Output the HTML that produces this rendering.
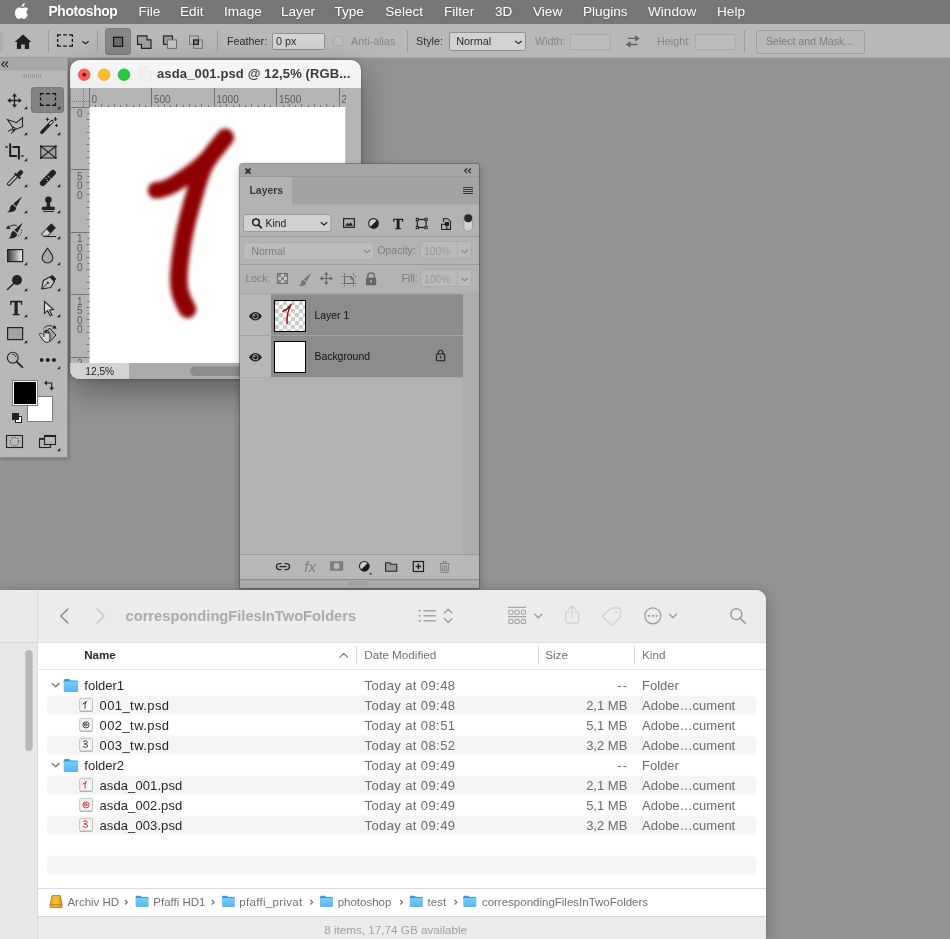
<!DOCTYPE html>
<html><head><meta charset="utf-8"><title>Photoshop</title>
<style>
*{box-sizing:border-box;margin:0;padding:0}
html,body{width:950px;height:939px;overflow:hidden;background:#939393;font-family:"Liberation Sans",sans-serif;}
body{position:relative}
.abs,.abs *{position:absolute}
.t{position:absolute;white-space:nowrap;line-height:1;will-change:opacity}
svg{position:absolute;overflow:visible}
/* menubar */
#menubar{left:0;top:0;width:950px;height:24px;background:#777777}
#menubar .t{color:#fff;font-size:13.6px;top:4.9px;text-shadow:0 1px 2px rgba(0,0,0,.25)}
/* options bar */
#opts{left:0;top:24px;width:950px;height:34px;background:#b8b8b8;border-bottom:1px solid #a6a6a6}
#opts .t{font-size:10.8px;color:#2a2a2a;top:12px}
#opts .dis{color:#878787}
.sep{position:absolute;width:1px;background:#9a9a9a;top:6px;height:22px}
/* tools */
#toolsvg,#toolT{z-index:6}
#tools{z-index:5;left:0;top:58px;width:68px;height:400px;background:#b8b8b8;border-right:1px solid #8f8f8f;border-bottom:1px solid #8f8f8f;box-shadow:1px 1px 3px rgba(0,0,0,.25)}
/* doc window */
#doc{left:70px;top:60px;width:291px;height:319px;border-radius:10px 10px 9px 9px;background:#b8b8b8;overflow:hidden;box-shadow:0 0 1px rgba(0,0,0,.6),0 0 4px rgba(0,0,0,.2),0 12px 32px rgba(0,0,0,.36)}
.rl{font-size:10px;color:#5a5a5a}
.rl.v{line-height:9.5px}
/* layers */
#layers{left:240px;top:164px;width:238.500px;height:423.500px;overflow:hidden;background:#b3b3b3;border-radius:3px 3px 0 0;box-shadow:0 0 0 1px rgba(90,90,90,.6),0 3px 8px rgba(0,0,0,.3)}
#layers .t{font-size:10.4px;color:#222;margin-top:1.3px}
/* finder */
#finder{left:0;top:590px;width:766px;height:349px;background:#fff;border-radius:0 10px 0 0;overflow:hidden;box-shadow:0 0 1px rgba(0,0,0,.45),0 3px 16px rgba(0,0,0,.24)}
#finder .t{font-size:13px;color:#262626}
#finder .gr{color:#6b6b6b}
#finder .nm{letter-spacing:0}
#finder .tw{letter-spacing:.42px}
#finder .dt{letter-spacing:.4px}
#finder .hd{font-size:11.700px;color:#727272}
#finder .pb{font-size:11.500px;color:#707070;margin-top:.6px}
</style></head><body>

<div id="menubar" class="abs">
<svg style="left:14.500px;top:2.500px" width="14" height="17" viewBox="0 0 14 17"><path d="M9.700 0.300c.1 1-.3 1.900-.9 2.600-.6.700-1.500 1.200-2.400 1.100-.1-.9.300-1.900.9-2.500.6-.7 1.600-1.200 2.400-1.200zM12.800 12.300c-.4.900-.6 1.300-1.100 2.100-.7 1.100-1.700 2.400-2.900 2.400-1.100 0-1.400-.7-2.800-.7-1.500 0-1.800.7-2.900.7-1.200 0-2.100-1.200-2.800-2.300C-1.200 11.900-.9 8.300.6 6.500c.9-1.100 2.200-1.700 3.400-1.700 1.300 0 2.100.7 3.100.7s1.700-.7 3.200-.7c1.100 0 2.300.6 3.100 1.600-2.700 1.500-2.300 5.400-.6 5.900z" fill="#fff" transform="translate(.6 0) scale(.95)"/></svg>
<span class="t" style="left:48.500px;font-weight:bold;font-size:13.800px;letter-spacing:-.35px;top:4.700px">Photoshop</span>
<span class="t" style="left:138.400px">File</span>
<span class="t" style="left:180px">Edit</span>
<span class="t" style="left:224px">Image</span>
<span class="t" style="left:281px">Layer</span>
<span class="t" style="left:334.400px">Type</span>
<span class="t" style="left:385.300px">Select</span>
<span class="t" style="left:444px">Filter</span>
<span class="t" style="left:495px">3D</span>
<span class="t" style="left:533px">View</span>
<span class="t" style="left:583px">Plugins</span>
<span class="t" style="left:648px">Window</span>
<span class="t" style="left:717px">Help</span>
</div>

<div id="opts" class="abs">
<svg style="left:0;top:0" width="950" height="34" viewBox="0 24 950 34">
<g stroke="#a3a3a3" stroke-width="1"><path d="M0 32.500h3M0 34.500h3M0 36.500h3M0 38.500h3M0 40.500h3M0 42.500h3M0 44.500h3M0 46.500h3M0 48.500h3M0 50.500h3"/></g>
<!-- home -->
<path d="M23 34.400L31.300 42h-2.200v6.900h-4.300v-4.500h-3.600v4.500h-4.300V42h-2.200z" fill="#1f1f1f"/>
<!-- marquee -->
<path d="M57.650 37V34.850H61M63.200 34.850H66.800M69 34.850H72.350V37M72.350 38.900V42.100M72.350 44V46.150H69M66.800 46.150H63.200M61 46.150H57.650V44M57.650 42.100V38.900" fill="none" stroke="#111" stroke-width="1.300"/>
<path d="M82.300 41.300L85.500 43.800L88.700 41.300" fill="none" stroke="#222" stroke-width="1.200"/>
<!-- selected -->
<rect x="105.500" y="28.500" width="25" height="26" rx="2.500" fill="#878787" stroke="#7c7c7c"/>
<rect x="113.600" y="37.300" width="9" height="9" fill="#6c6c6c" stroke="#111" stroke-width="1.200"/>
<!-- add -->
<path d="M137.500 35.900h9.500v4h4v8.500h-9.500v-4h-4z" fill="#a0a0a0" stroke="#1e1e1e" stroke-width="1.100"/>
<!-- subtract -->
<rect x="163.500" y="35.900" width="9" height="8.500" fill="#9a9a9a" stroke="#1e1e1e" stroke-width="1.100"/>
<rect x="167.500" y="39.900" width="9" height="8.500" fill="#c2c2c2" stroke="#6e6e6e" stroke-width="1"/>
<!-- intersect -->
<rect x="189.500" y="35.900" width="9" height="8.500" fill="none" stroke="#767676" stroke-width="1"/>
<rect x="193.500" y="39.900" width="9" height="8.500" fill="none" stroke="#767676" stroke-width="1"/>
<rect x="193.600" y="40" width="4.800" height="4.300" fill="#8c8c8c" stroke="#1e1e1e" stroke-width="1.200"/>
<!-- feather input -->
<rect x="272.500" y="33.500" width="52" height="16" rx="1" fill="#d4d4d4" stroke="#8e8e8e"/>
<!-- checkbox -->
<rect x="333.500" y="36.500" width="9" height="9" rx="1.500" fill="#bcbcbc" stroke="#a9a9a9"/>
<!-- style select -->
<rect x="449.500" y="32.500" width="76" height="18" rx="2" fill="#d2d2d2" stroke="#8e8e8e"/>
<path d="M515.300 41L518.500 43.600L521.700 41" fill="none" stroke="#222" stroke-width="1.200"/>
<!-- width/height inputs -->
<rect x="570.500" y="34.500" width="39.500" height="15" fill="#bcbcbc" stroke="#a8a8a8"/>
<rect x="695.500" y="34.500" width="39.500" height="15" fill="#bcbcbc" stroke="#a8a8a8"/>
<!-- swap -->
<g fill="#626262"><path d="M628 37.700h7v-2.500l4.800 3.200-4.800 3.200v-2.500h-7z"/><path d="M637.500 43.800h-7v-2.500l-4.800 3.200 4.800 3.200v-2.500h7z"/></g>
<!-- select and mask -->
<rect x="756.500" y="30.500" width="108" height="23" rx="2" fill="#b8b8b8" stroke="#9c9c9c"/>
</svg>
<div class="sep" style="left:48px"></div>
<div class="sep" style="left:97px"></div>
<div class="sep" style="left:217px"></div>
<div class="sep" style="left:407px"></div>
<div class="sep" style="left:744px"></div>
<span class="t" id="o1" style="left:227px">Feather:</span>
<span class="t" id="o2" style="left:276px">0 px</span>
<span class="t dis" id="o3" style="left:351px">Anti-alias</span>
<span class="t" id="o4" style="left:416px">Style:</span>
<span class="t" id="o5" style="left:456.300px">Normal</span>
<span class="t dis" id="o6" style="left:535px">Width:</span>
<span class="t dis" id="o7" style="left:657px">Height:</span>
<span class="t dis" id="o8" style="left:766px;color:#7e7e7e;letter-spacing:-.1px">Select and Mask...</span>
</div>

<div id="tools" class="abs"></div>
<svg id="toolsvg" style="left:0;top:0" width="70" height="460" viewBox="0 0 70 460">
<defs>
<linearGradient id="gr1" x1="0" x2="1" y1="0" y2="0"><stop offset="0" stop-color="#3a3a3a"/><stop offset="1" stop-color="#f4f4f4"/></linearGradient>
</defs>
<!-- header -->
<rect x="0" y="58" width="67.500" height="12.500" fill="#a8a8a8"/>
<path d="M4.500 61.500L1.800 64.300L4.500 67.100M8 61.500L5.300 64.300L8 67.100" fill="none" stroke="#222" stroke-width="1.100"/>
<g stroke="#9c9c9c" stroke-width="1"><path d="M22.500 74v4M24.500 74v4M26.500 74v4M28.500 74v4M30.500 74v4M32.500 74v4M34.500 74v4M36.500 74v4M38.500 74v4M40.500 74v4"/></g>
<!-- selected bg -->
<rect x="31.500" y="87.500" width="32" height="25" rx="2.500" fill="#838383" stroke="#787878"/>
<!-- corner triangles -->
<g>
<path d="M24 109.2L27.2 106V109.2z" fill="#222"/><path d="M57 109.2L60.2 106V109.2z" fill="#222"/>
<path d="M24 135.2L27.2 132V135.2z" fill="#222"/><path d="M57 135.2L60.2 132V135.2z" fill="#222"/>
<path d="M24 161.2L27.2 158V161.2z" fill="#222"/>
<path d="M24 187.2L27.2 184V187.2z" fill="#222"/><path d="M57 187.2L60.2 184V187.2z" fill="#222"/>
<path d="M24 213.2L27.2 210V213.2z" fill="#222"/><path d="M57 213.2L60.2 210V213.2z" fill="#222"/>
<path d="M24 239.2L27.2 236V239.2z" fill="#222"/><path d="M57 239.2L60.2 236V239.2z" fill="#222"/>
<path d="M24 265.2L27.2 262V265.2z" fill="#222"/><path d="M57 265.2L60.2 262V265.2z" fill="#222"/>
<path d="M24 291.2L27.2 288V291.2z" fill="#222"/><path d="M57 291.2L60.2 288V291.2z" fill="#222"/>
<path d="M24 317.2L27.2 314V317.2z" fill="#222"/><path d="M57 317.2L60.2 314V317.2z" fill="#222"/>
<path d="M24 343.2L27.2 340V343.2z" fill="#222"/><path d="M57 343.2L60.2 340V343.2z" fill="#222"/>
<path d="M57 369.2L60.2 366V369.2z" fill="#222"/>
<path d="M57 451.2L60.2 448V451.2z" fill="#222"/>
</g>
<!-- 1 move -->
<g stroke="#222" stroke-width="1.300" fill="#222">
<path d="M14.500 95v11M9 100.500h11" fill="none"/>
<path d="M14.500 93.200l-2.600 3.300h5.200zM14.500 107.800l-2.600-3.300h5.200zM7.200 100.500l3.300-2.600v5.200zM21.800 100.500l-3.300-2.600v5.200z" stroke="none"/>
</g>
<!-- 2 marquee -->
<path d="M40.550 95.500V93.550H43.800M46.100 93.550H49.900M52.200 93.550H55.450V95.500M55.450 97.400V100.600M55.450 102.900V105.250H52.200M49.900 105.250H46.100M43.800 105.250H40.550V102.900M40.550 100.600V97.400" fill="none" stroke="#111" stroke-width="1.350"/>
<!-- 3 poly lasso -->
<g fill="none" stroke="#222" stroke-width="1.100" stroke-linejoin="miter">
<path d="M13 127.500L7.400 119.600L16.300 122.700L22.500 117.700V126.700L15 129.600"/>
<circle cx="13.700" cy="128.600" r="1.300"/>
<path d="M12.600 129.300L8 131.200M14 130L11.500 133.500M15 129.600L13 132"/>
</g>
<!-- 4 wand -->
<g>
<path d="M41.800 132.300L52 121.600" stroke="#222" stroke-width="3.400" stroke-linecap="round"/>
<path d="M50 123.800L52 121.700" stroke="#ddd" stroke-width="1.500" stroke-linecap="round"/>
<path d="M47.500 117.700v3.400M45.800 119.400h3.400M55.500 117v4M53.500 119h4M56.500 124v3M55 125.500h3" stroke="#222" stroke-width="1"/>
</g>
<!-- 5 crop -->
<g fill="none" stroke="#1e1e1e" stroke-width="2">
<path d="M10.200 143.300V156H17M12.500 147H18.900V159.500"/>
<path d="M5.300 147h2.400M21.300 156h2.400" stroke-width="1.600"/>
</g>
<!-- 6 frame -->
<g stroke="#222" stroke-width="1.100">
<rect x="40.800" y="146.200" width="15" height="11.800" fill="#a2a2a2"/>
<path d="M40.800 146.200L55.800 158M55.800 146.200L40.800 158" fill="none"/>
<g fill="#222" stroke="none"><rect x="40" y="145.400" width="1.800" height="1.800"/><rect x="54.900" y="145.400" width="1.800" height="1.800"/><rect x="40" y="157.100" width="1.800" height="1.800"/><rect x="54.900" y="157.100" width="1.800" height="1.800"/></g>
</g>
<!-- 7 eyedropper -->
<g transform="translate(.6 2)">
<path d="M16.800 175.200L9 183.200a1.500 1.500 0 0 1-2-2L14.800 173.200" fill="#c8c8c8" stroke="#222" stroke-width="1.100"/>
<path d="M13.300 172l1.300-1.300 1.300 1.100 2.600-2.800a2 2 0 0 1 3.600 2.600l-2.800 3 1.100 1.300-1.400 1.400z" fill="#222"/>
</g>
<!-- 8 bandage -->
<g>
<path d="M42.700 183.200L53 172.700" stroke="#222" stroke-width="5.700" stroke-linecap="round"/>
<g fill="#ccc"><circle cx="46.300" cy="178.600" r=".6"/><circle cx="48.400" cy="176.600" r=".6"/><circle cx="47.400" cy="180.500" r=".6"/><circle cx="50.300" cy="177.800" r=".6"/></g>
</g>
<!-- 9 brush -->
<g fill="#222">
<path d="M22 196.600L16.500 206.500L13.300 203.700z"/>
<path d="M12.500 204.500l3.500 3.100c.6 3.200-3 5.200-9.100 4.400 2.300-.7 2.700-1.800 2.900-3.300.3-2.200 1.400-3.700 2.700-4.200z"/>
</g>
<!-- 10 stamp -->
<g fill="#222">
<circle cx="48.400" cy="199.700" r="3.300"/>
<path d="M46.900 202h3l.4 4.800h3.500a1 1 0 0 1 1 1v2.300H41.800v-2.300a1 1 0 0 1 1-1h3.700z"/>
<rect x="43" y="210.900" width="11" height="1"/>
</g>
<!-- 11 history brush -->
<g fill="#222">
<path d="M22.800 222.400L17.500 232.700L14.300 229.900z"/>
<path d="M13.500 230.700l3.500 3.100c.6 3.200-3 5.200-8.900 4.400 2.300-.7 2.500-1.800 2.700-3.300.3-2.200 1.400-3.700 2.700-4.200z"/>
<path d="M6 228.700l4.600.2-2.400-3.700z"/>
<path d="M9.300 226.600c2.500-1.700 5.200-1.700 7.500-1.100" fill="none" stroke="#222" stroke-width="1"/>
<path d="M21.500 229.500c.6 2.800-.8 5.500-3.500 6.800" fill="none" stroke="#222" stroke-width="1" stroke-dasharray="1 1.300"/>
</g>
<!-- 12 eraser -->
<g>
<path d="M51.300 223.800L55.400 227.900L47.500 236.200H43.500L41.500 234.200z" fill="#d0d0d0" stroke="#222" stroke-width="1"/>
<path d="M51.300 223.800L55.400 227.900L50.300 233.300L46.200 229.100z" fill="#222"/>
<path d="M44 236.500h12" stroke="#222" stroke-width="1.100"/>
</g>
<!-- 13 gradient -->
<rect x="7.600" y="249.600" width="15" height="12" fill="url(#gr1)" stroke="#222" stroke-width="1.200"/>
<!-- 14 drop -->
<path d="M47.500 248.300c2.800 4 5.400 6.600 5.400 9.500a5.400 5.200 0 0 1-10.800 0c0-2.900 2.600-5.500 5.400-9.500z" fill="#a8a8a8" stroke="#222" stroke-width="1.100"/>
<!-- 15 dodge -->
<g><circle cx="17" cy="280" r="5" fill="#222"/><path d="M13.400 283.800L7.500 289.500" stroke="#222" stroke-width="1.500" stroke-linecap="round"/></g>
<!-- 16 pen -->
<g>
<path d="M41.600 289L43.300 280.600L50 276.800L54.500 281.500L50.800 287.500z" fill="#c4c4c4" stroke="#222" stroke-width="1.100" stroke-linejoin="round"/>
<path d="M41.800 288.800L47.500 283.200" stroke="#222" stroke-width="1"/>
<circle cx="47.900" cy="282.800" r="1.100" fill="#222"/>
<path d="M49.800 277L52.200 274.700L56.300 279L54 281.300z" fill="#222"/>
</g>
<!-- 18 arrow -->
<path d="M44.500 301.500V313.300L47.600 310.700L50.200 315.800L52 314.900L49.500 309.900L53.500 309.500z" fill="#dcdcdc" stroke="#222" stroke-width="1.100" stroke-linejoin="miter"/>
<!-- 19 rectangle -->
<rect x="7.600" y="327.600" width="15" height="12" fill="#a4a4a4" stroke="#222" stroke-width="1.200"/>
<!-- 20 rotate view -->
<g fill="none" stroke="#222" stroke-width="1">
<path d="M49.500 328L56 335L50 341.500L43.500 334.500z" fill="#a4a4a4"/>
<path d="M43.500 328.500c2.600-3.200 7.300-3.800 10.500-1.300" />
<path d="M56.800 328.800l-4.600-.2 2.500-3.600z" fill="#222" stroke="none"/>
<path d="M42.500 334.500c-1-1.200-2.400-1.400-3-.8-.6.700.3 1.600 1.200 2.900 1 1.500 1.800 3.400 3.300 4.800 1.500 1.300 4.300 1.300 5.200 0 .7-1 .7-2.400.7-3.600V333.400c0-1.200-1.500-1.200-1.500 0M48.400 333.400v-2c0-1.200-1.500-1.200-1.500 0v2M46.900 333v-2.300c0-1.200-1.500-1.200-1.500 0V333M45.400 333v-1.200c0-1.200-1.500-1.200-1.500 0v5.200" fill="#d6d6d6"/>
</g>
<!-- 21 zoom -->
<g fill="none" stroke="#222">
<circle cx="12.800" cy="357.700" r="5.400" stroke-width="1.100"/>
<path d="M16.800 361.800L22.500 367.300" stroke-width="1.700" stroke-linecap="round"/>
<path d="M12 354.600c1.800-.5 3.600.6 4 2.600" stroke-width=".9"/>
</g>
<!-- 22 more -->
<g fill="#222"><circle cx="41.700" cy="360" r="2"/><circle cx="47.800" cy="360" r="2"/><circle cx="54" cy="360" r="2"/></g>
<!-- colours -->
<rect x="27.500" y="396.500" width="25" height="25" fill="#fff" stroke="#7a7a7a" stroke-width="1"/>
<rect x="12.500" y="380.500" width="25" height="25" fill="#fff" stroke="#7a7a7a" stroke-width="1"/>
<rect x="14" y="382" width="22" height="22" fill="#000"/>
<g stroke="#222" stroke-width="1.200" fill="none"><path d="M46 383h5.700v6"/></g>
<path d="M44 383l3-2.400v4.800zM51.700 390.500l-2.400-3h4.800z" fill="#222"/>
<rect x="15.500" y="416.500" width="6" height="6" fill="#fff" stroke="#222" stroke-width="1"/>
<rect x="12" y="413" width="7" height="7" fill="#222"/>
<!-- quick mask -->
<rect x="6.500" y="435.500" width="16" height="12" fill="none" stroke="#222" stroke-width="1.100"/>
<circle cx="14.500" cy="441.500" r="4.300" fill="none" stroke="#222" stroke-width="1" stroke-dasharray="1 1.250"/>
<!-- screen mode -->
<rect x="39.500" y="438.500" width="11" height="9" fill="#b8b8b8" stroke="#222" stroke-width="1.100"/>
<rect x="44.500" y="435.500" width="11" height="9" fill="#b8b8b8" stroke="#222" stroke-width="1.100"/>
<rect x="44" y="435" width="12" height="2" fill="#222"/>
<rect x="39" y="438" width="5" height="1.800" fill="#222"/>
</svg>
<span class="t" id="toolT" style="-webkit-text-stroke:.4px #222;left:9.800px;top:296.500px;font-family:'Liberation Serif',serif;font-weight:bold;font-size:22px;color:#222;transform:scaleX(.84);transform-origin:0 0">T</span>

<div id="doc" class="abs">
<div style="left:0;top:0;width:291px;height:28px;background:linear-gradient(#f7f7f7,#f0f0f0)"></div>
<svg style="left:0;top:0" width="291" height="319" viewBox="70 60 291 319">
<!-- traffic lights -->
<circle cx="84.200" cy="74.700" r="5.800" fill="#fe5f57" stroke="#e2443d" stroke-width=".7"/>
<circle cx="84.200" cy="74.700" r="1.900" fill="#6e0a08"/>
<circle cx="104.100" cy="74.700" r="5.800" fill="#febc2e" stroke="#e0a024" stroke-width=".7"/>
<circle cx="124" cy="74.700" r="5.800" fill="#28c840" stroke="#1eab2e" stroke-width=".7"/>
<!-- doc icon -->
<path d="M139.500 66.800h7.800l4.200 4.200v9.500h-12z" fill="#f1f1f1" stroke="#e6e6e6" stroke-width=".6"/>
<path d="M147.300 66.800v4.200h4.200z" fill="#fbfbfb" stroke="#e4e4e4" stroke-width=".5"/>
<!-- rulers -->
<rect x="70" y="88" width="291" height="291" fill="#b5b5b5"/>
<rect x="89.500" y="107" width="256" height="256" fill="#fff"/>
<g stroke="#747474" stroke-width="1">
<path d="M89.500 88v19M151.500 88v19M214.500 88v19M276.500 88v19M339.500 88v19"/>
<path d="M70 107.500h19.500M70 169.500h19.500M70 232.500h19.500M70 294.500h19.500M70 357.500h19.500"/>
<path d="M70.500 88v291" stroke="#8d8d8d"/>
</g>
<g stroke="#747474" stroke-width="1" id="ticks"><path d="M95.5 105v2M101.5 104v3M108.5 105v2M114.5 104v3M120.5 105v2M126.5 104v3M133.5 105v2M139.5 104v3M145.5 105v2M158.5 105v2M164.5 104v3M170.5 105v2M176.5 104v3M183.5 105v2M189.5 104v3M195.5 105v2M201.5 104v3M208.5 105v2M220.5 105v2M226.5 104v3M233.5 105v2M239.5 104v3M245.5 105v2M251.5 104v3M258.5 105v2M264.5 104v3M270.5 105v2M283.5 105v2M289.5 104v3M295.5 105v2M301.5 104v3M308.5 105v2M314.5 104v3M320.5 105v2M326.5 104v3M333.5 105v2"/><path d="M87.5 113.5h2M86.5 119.5h3M87.5 126.5h2M86.5 132.5h3M87.5 138.5h2M86.5 144.5h3M87.5 151.5h2M86.5 157.5h3M87.5 163.5h2M87.5 176.5h2M86.5 182.5h3M87.5 188.5h2M86.5 194.5h3M87.5 201.5h2M86.5 207.5h3M87.5 213.5h2M86.5 219.5h3M87.5 226.5h2M87.5 238.5h2M86.5 244.5h3M87.5 251.5h2M86.5 257.5h3M87.5 263.5h2M86.5 269.5h3M87.5 276.5h2M86.5 282.5h3M87.5 288.5h2M87.5 301.5h2M86.5 307.5h3M87.5 313.5h2M86.5 319.5h3M87.5 326.5h2M86.5 332.5h3M87.5 338.5h2M86.5 344.5h3M87.5 351.5h2"/></g>
<path d="M83.500 88v19M70 101.500h19.500" stroke="#777" stroke-width="1" stroke-dasharray="1 1"/>
<!-- status -->
<rect x="70" y="363" width="291" height="16" fill="#ababab"/>
<rect x="70" y="363" width="59" height="16" fill="#d2d2d2"/>
<rect x="190" y="366.500" width="200" height="9.500" rx="4.700" fill="#8c8c8c"/>
<rect x="345.500" y="88" width="16" height="275" fill="#b5b5b5"/>
<!-- brush stroke -->
<g filter="url(#blur1)" fill="none" stroke="#8e0000" stroke-linecap="round" stroke-linejoin="round"><path d="M156 190.300C163 190 172 186 180 180.500S197 170 206 160" stroke-width="16.500"/><path d="M225.300 137.300C218.500 146 210.500 155 205.500 163.500S196.500 188 191.500 205S181.500 245 179.300 268S181.500 298 187.500 309.500" stroke-width="17.500"/></g>
<defs><filter id="blur1" x="-20%" y="-20%" width="140%" height="140%"><feGaussianBlur stdDeviation="1.900"/></filter></defs>
</svg>
<span class="t" id="dtitle" style="left:87px;top:6.800px;font-size:13px;font-weight:bold;color:#3b3b3b;letter-spacing:.14px">asda_001.psd @ 12,5% (RGB...</span>
<span class="t rl" style="left:21.500px;top:34.500px">0</span>
<span class="t rl" style="left:84px;top:34.500px">500</span>
<span class="t rl" style="left:146.500px;top:34.500px">1000</span>
<span class="t rl" style="left:209px;top:34.500px">1500</span>
<span class="t rl" style="left:271.500px;top:34.500px;width:4px;overflow:hidden">2</span>
<span class="t rl" style="left:7px;top:48.500px">0</span>
<span class="t rl v" style="left:7px;top:111.500px">5<br>0<br>0</span>
<span class="t rl v" style="left:7px;top:174px">1<br>0<br>0<br>0</span>
<span class="t rl v" style="left:7px;top:236.500px">1<br>5<br>0<br>0</span>
<span class="t rl" style="left:7px;top:299px;height:4px;overflow:hidden">2</span>
<span class="t" id="zoomtxt" style="left:15.300px;top:306.500px;font-size:10.200px;color:#222">12,5%</span>
</div>

<div id="layers" class="abs">
<svg style="left:0;top:0" width="239" height="424" viewBox="240 164 239 424">
<defs>
<pattern id="chk" x="275" y="301" width="8" height="8" patternUnits="userSpaceOnUse"><rect width="8" height="8" fill="#fff"/><rect width="4" height="4" fill="#ccc"/><rect x="4" y="4" width="4" height="4" fill="#ccc"/></pattern>
</defs>
<!-- header -->
<path d="M240 167a3 3 0 0 1 3-3h233a3 3 0 0 1 3 3v9.500H240z" fill="#a6a6a6"/>
<rect x="240" y="176.500" width="239" height="28" fill="#a3a3a3"/>
<rect x="240" y="176" width="239" height="1" fill="#999"/>
<rect x="240" y="177" width="52" height="28" fill="#b3b3b3"/>
<path d="M245.500 168.700l5 5M250.500 168.700l-5 5" stroke="#2a2a2a" stroke-width="1.700"/>
<path d="M467.200 168.500L464.600 170.800L467.200 173.100M470.900 168.500L468.300 170.800L470.900 173.100" fill="none" stroke="#222" stroke-width="1.100"/>
<path d="M463 187.500h10M463 189.500h10M463 191.500h10M463 193.500h10" stroke="#3a3a3a" stroke-width="1"/>
<!-- filter row -->
<rect x="243.500" y="214.500" width="87.500" height="17" rx="2" fill="#d0d0d0" stroke="#9b9b9b"/>
<circle cx="256" cy="222.200" r="3.300" fill="none" stroke="#222" stroke-width="1.500"/><path d="M258.400 224.800L261.300 227.800" stroke="#222" stroke-width="1.800" stroke-linecap="round"/>
<path d="M320.800 222.300L324 225L327.200 222.300" fill="none" stroke="#222" stroke-width="1.200"/>
<!-- image icon -->
<rect x="343.600" y="218.700" width="10.800" height="8.600" fill="none" stroke="#1e1e1e" stroke-width="1.200"/>
<path d="M345.300 225.800l2.300-3.300 1.500 2 1.500-2.600 2.300 3.900z" fill="#1e1e1e"/>
<!-- adj -->
<circle cx="373.500" cy="223.400" r="4.800" fill="#cfcfcf" stroke="#1e1e1e" stroke-width="1.100"/>
<path d="M377 220a4.800 4.800 0 0 1-6.900 6.900z" fill="#1e1e1e"/>
<!-- shape -->
<rect x="417.300" y="219.500" width="8.800" height="8" fill="none" stroke="#1e1e1e" stroke-width="1.200"/>
<g fill="#b3b3b3" stroke="#1e1e1e" stroke-width=".9"><rect x="416.200" y="218.300" width="2.300" height="2.300"/><rect x="424.900" y="218.300" width="2.300" height="2.300"/><rect x="416.200" y="226.400" width="2.300" height="2.300"/><rect x="424.900" y="226.400" width="2.300" height="2.300"/></g>
<!-- smart object -->
<path d="M443.500 222V218.700h4.300l2.700 2.700v8h-3.500" fill="none" stroke="#1e1e1e" stroke-width="1.100"/>
<rect x="441.600" y="224.300" width="5.200" height="5.200" fill="#b3b3b3" stroke="#1e1e1e" stroke-width="1"/>
<rect x="445" y="222" width="4" height="4" fill="#1e1e1e"/>
<!-- toggle -->
<rect x="463.800" y="214" width="8.800" height="17.300" rx="4.400" fill="#d2d2d2" stroke="#9a9a9a" stroke-width=".9"/>
<circle cx="468.200" cy="218.200" r="4" fill="#2a2a2a"/>
<!-- dividers -->
<rect x="240" y="236" width="239" height="1" fill="#9c9c9c"/>
<rect x="240" y="264" width="239" height="1" fill="#9c9c9c"/>
<rect x="240" y="293.500" width="239" height="1" fill="#a2a2a2"/>
<!-- blend row -->
<rect x="243.500" y="242.500" width="130" height="17" rx="2" fill="#bcbcbc" stroke="#acacac"/>
<path d="M363.800 250L367 252.700L370.200 250" fill="none" stroke="#858585" stroke-width="1.100"/>
<rect x="420.500" y="241.500" width="51" height="17" rx="2" fill="#bababa" stroke="#aaa"/>
<path d="M457.500 241.500v17" stroke="#aaa"/>
<path d="M461.300 250L464.500 252.700L467.700 250" fill="none" stroke="#858585" stroke-width="1.100"/>
<rect x="420.500" y="269.500" width="51" height="17" rx="2" fill="#bababa" stroke="#aaa"/>
<path d="M457.500 269.500v17" stroke="#aaa"/>
<path d="M461.300 278L464.500 280.700L467.700 278" fill="none" stroke="#858585" stroke-width="1.100"/>
<!-- lock icons -->
<g>
<rect x="277.500" y="273.500" width="10" height="10" fill="#c6c6c6" stroke="#6e6e6e"/>
<g fill="#8a8a8a"><rect x="278" y="274" width="3" height="3"/><rect x="284" y="274" width="3" height="3"/><rect x="281" y="277" width="3" height="3"/><rect x="278" y="280" width="3" height="3"/><rect x="284" y="280" width="3" height="3"/></g>
<g fill="#747474" transform="translate(292.500 105.900) scale(.85)"><path d="M22 196.600L16.500 206.500L13.300 203.700z"/><path d="M12.500 204.500l3.500 3.100c.6 3.200-3 5.200-9.100 4.400 2.300-.7 2.700-1.800 2.900-3.300.3-2.200 1.400-3.700 2.700-4.200z"/></g>
<g stroke="#666" stroke-width="1.100" fill="#666"><path d="M326.300 273.800v9.500M321.500 278.500h9.500" fill="none"/><path d="M326.300 272l-2.300 2.800h4.600zM326.300 285l-2.300-2.800h4.600zM319.800 278.500l2.800-2.300v4.600zM332.800 278.500l-2.800-2.300v4.600z" stroke="none"/></g>
<g fill="none" stroke="#666" stroke-width="1.100"><path d="M344.500 276.500h6.500l2.500 2.500v4.500h-9z"/><path d="M351 276.500v2.500h2.500" /><path d="M344.500 273.500v1.500M353.500 273.500v1.500M344.500 285v1.200M353.500 285v1.200M341.800 276.500h1.400M341.800 283.500h1.400M354.800 276.500h1.400M354.800 283.500h1.400" stroke-width="1"/></g>
<g><path d="M367.800 278v-1.800a3.300 3.300 0 0 1 6.600 0v1.800" fill="none" stroke="#666" stroke-width="1.400"/><rect x="366" y="277.800" width="10.200" height="7.400" rx=".8" fill="#666"/><rect x="370.300" y="280.300" width="1.600" height="2" fill="#c8c8c8"/></g>
</g>
<!-- layer rows -->
<rect x="240" y="294.500" width="31" height="83" fill="#b7b7b7"/>
<rect x="271" y="294.500" width="192" height="40.500" fill="#8c8c8c"/>
<rect x="271" y="336" width="192" height="41" fill="#8c8c8c"/>
<rect x="240" y="335" width="223" height="1" fill="#a3a3a3"/>
<rect x="240" y="377" width="223" height="1" fill="#a8a8a8"/>
<rect x="463" y="294.500" width="16" height="260" fill="#adadad"/>
<g transform="translate(255.400 316.200)"><path d="M-6.400 0C-4.500-3-2-4.300 0-4.300S4.500-3 6.400 0C4.500 3 2 4.300 0 4.300S-4.500 3-6.400 0z" fill="#1e1e1e"/><circle r="3" fill="#b7b7b7"/><circle r="2.200" fill="#1e1e1e"/><circle cx="-.7" cy="-.8" r=".75" fill="#b7b7b7"/></g>
<g transform="translate(255.400 357.300)"><path d="M-6.400 0C-4.500-3-2-4.300 0-4.300S4.500-3 6.400 0C4.500 3 2 4.300 0 4.300S-4.500 3-6.400 0z" fill="#1e1e1e"/><circle r="3" fill="#b7b7b7"/><circle r="2.200" fill="#1e1e1e"/><circle cx="-.7" cy="-.8" r=".75" fill="#b7b7b7"/></g>
<rect x="274.500" y="300.500" width="31" height="31" fill="url(#chk)" stroke="#000"/>
<rect x="274.500" y="341.500" width="31" height="31" fill="#fff" stroke="#000"/>
<path d="M283 311.200c2.500-.8 5.800-3.500 8.200-6.700-2.700 4.500-4.500 11-4.200 19" fill="none" stroke="#930000" stroke-width="1.400" stroke-linecap="round" stroke-linejoin="round"/>
<!-- bg lock -->
<g><path d="M438.300 354v-1.500a2.300 2.300 0 0 1 4.600 0V354" fill="none" stroke="#1e1e1e" stroke-width="1.100"/><rect x="436.500" y="354" width="8.200" height="6.800" rx=".6" fill="none" stroke="#1e1e1e" stroke-width="1.100"/><rect x="439.900" y="356.400" width="1.400" height="1.800" fill="#1e1e1e"/></g>
<!-- bottom bar -->
<rect x="240" y="554.500" width="239" height="25" fill="#b8b8b8"/>
<rect x="240" y="554" width="239" height="1" fill="#9a9a9a"/>
<rect x="240" y="579" width="239" height="1.500" fill="#8e8e8e"/>
<rect x="240" y="580.500" width="239" height="7.500" fill="#b0b0b0"/>
<path d="M349.500 581.500v3.500M351.500 581.500v3.500M353.500 581.500v3.500M355.500 581.500v3.500M357.500 581.500v3.500M359.500 581.500v3.500M361.500 581.500v3.500M363.500 581.500v3.500M365.500 581.500v3.500M367.500 581.500v3.500" stroke="#989898"/>
<!-- link -->
<g fill="none" stroke="#2a2a2a" stroke-width="1.350"><path d="M281.500 563.600h-2a3 3 0 0 0 0 6h2M284.500 563.600h2a3 3 0 0 1 0 6h-2"/><path d="M279.500 566.600h7"/></g>
<!-- mask -->
<rect x="330" y="561.200" width="13.200" height="9.600" fill="#7e7e7e"/><circle cx="336.600" cy="566" r="2.900" fill="#bdbdbd"/>
<!-- adj -->
<circle cx="364.300" cy="566.300" r="4.800" fill="#d0d0d0" stroke="#1e1e1e" stroke-width="1.100"/>
<path d="M367.800 562.900a4.800 4.800 0 0 1-6.900 6.900z" fill="#1e1e1e"/>
<path d="M369 573.200h3.200l-1.600 1.800z" fill="#1e1e1e"/>
<!-- folder -->
<path d="M385.600 571.200v-8.400h4.300l1.300 1.500h5.600v6.900z" fill="#9a9a9a" stroke="#222" stroke-width="1.100" stroke-linejoin="round"/>
<!-- new -->
<rect x="413.300" y="561.500" width="10.200" height="10" fill="none" stroke="#1e1e1e" stroke-width="1.200"/>
<path d="M418.400 563.800v5.400M415.700 566.500h5.400" stroke="#1e1e1e" stroke-width="1.300"/>
<!-- trash -->
<g fill="none" stroke="#808080" stroke-width="1"><path d="M439.500 563.500h10.200M443 563.300v-1.600h3.200v1.600M440.600 563.800l.5 8.500h7l.5-8.500"/><path d="M442.800 565.300v5.700M444.600 565.300v5.700M446.400 565.300v5.700" stroke-width=".9"/></g>
</svg>
<span class="t" id="l1" style="left:9.500px;top:21px;font-weight:bold;color:#383838">Layers</span>
<span class="t" id="l2" style="left:25.500px;top:53.500px">Kind</span>
<span class="t" id="l3" style="left:153.200px;top:52.300px;font-family:'Liberation Serif',serif;font-weight:bold;font-size:14px !important;color:#1e1e1e;-webkit-text-stroke:.3px #1e1e1e;transform:scaleX(1.1);transform-origin:0 0">T</span>
<span class="t" id="l4" style="left:11.500px;top:81.500px;color:#7c7c7c">Normal</span>
<span class="t" id="l5" style="left:137.500px;top:81px;color:#7c7c7c">Opacity:</span>
<span class="t" id="l6" style="left:184px;top:81.500px;color:#9a9a9a">100%</span>
<span class="t" id="l7" style="left:5.500px;top:108.500px;color:#7c7c7c">Lock:</span>
<span class="t" id="l8" style="left:161.500px;top:108.500px;color:#7c7c7c">Fill:</span>
<span class="t" id="l9" style="left:184px;top:109.500px;color:#9a9a9a">100%</span>
<span class="t" id="l10" style="left:74.500px;top:146px;color:#111">Layer 1</span>
<span class="t" id="l11" style="left:74.500px;top:187px;color:#111">Background</span>
<span class="t" id="l12" style="left:64.300px;top:393.300px;font-style:italic;font-size:15px !important;color:#7d7d7d">fx</span>
</div>

<div id="finder" class="abs">
<div style="left:0;top:0;width:766px;height:52px;background:#ececec"></div>
<div style="left:0;top:0;width:37px;height:349px;background:#e8e8e8"></div>
<div style="left:0;top:0;width:37px;height:52px;background:#ebebeb"></div>
<div style="left:37px;top:298px;width:729px;height:1px;background:#dcdcdc"></div>
<div style="left:37px;top:326px;width:729px;height:23px;background:#ececec;border-top:1px solid #d6d6d6"></div>
<svg style="left:0;top:0" width="766" height="349" viewBox="0 590 766 349">
<defs><linearGradient id="hdg" x1="0" x2="1" y1="0" y2="0"><stop offset="0" stop-color="#e9a516"/><stop offset=".5" stop-color="#f6bf3a"/><stop offset="1" stop-color="#dd9a12"/></linearGradient><linearGradient id="fg" x1="0" x2="0" y1="0" y2="1"><stop offset="0" stop-color="#7bcdf9"/><stop offset="1" stop-color="#58b5f1"/></linearGradient></defs>
<path d="M37.500 590v349" stroke="#d9d9d9"/>
<path d="M0 642.500h37" stroke="#d6d6d6"/>
<path d="M37 642.500h729" stroke="#dedede"/>
<path d="M37 669.500h729" stroke="#e4e4e4"/>
<rect x="25.300" y="650" width="7.400" height="101" rx="3.700" fill="#b9b9b9"/>
<!-- nav -->
<path d="M67.800 609.200L60.800 616L67.800 622.800" fill="none" stroke="#929292" stroke-width="1.700" stroke-linecap="round" stroke-linejoin="round"/>
<path d="M97.300 609.200L104.300 616L97.300 622.800" fill="none" stroke="#c8c8c8" stroke-width="1.700" stroke-linecap="round" stroke-linejoin="round"/>
<!-- list view -->
<g stroke="#a4a4a4" stroke-width="1.400" stroke-linecap="round"><path d="M424 610.800h11.500M424 615.800h11.500M424 620.800h11.500"/><path d="M419.500 610.800h.4M419.500 615.800h.4M419.500 620.800h.4" stroke-width="1.900"/></g>
<path d="M444.500 613L448.200 609.300L451.900 613M444.500 618.800L448.200 622.500L451.900 618.800" fill="none" stroke="#9c9c9c" stroke-width="1.500" stroke-linecap="round" stroke-linejoin="round"/>
<!-- group -->
<g fill="none" stroke="#a4a4a4" stroke-width="1.150"><path d="M508 607.300h18" stroke-width="1.200"/><rect x="508.700" y="610.200" width="4.200" height="4" rx="1"/><rect x="515" y="610.200" width="4.200" height="4" rx="1"/><rect x="521.300" y="610.200" width="4.200" height="4" rx="1"/><path d="M508 616.600h18" stroke-width="1.200"/><rect x="508.700" y="619.500" width="4.200" height="4" rx="1"/><rect x="515" y="619.500" width="4.200" height="4" rx="1"/><rect x="521.300" y="619.500" width="4.200" height="4" rx="1"/></g>
<path d="M534.800 614.300L538.300 617.700L541.800 614.300" fill="none" stroke="#9c9c9c" stroke-width="1.500" stroke-linecap="round" stroke-linejoin="round"/>
<!-- share -->
<g fill="none" stroke="#d2d2d2" stroke-width="1.300" stroke-linecap="round" stroke-linejoin="round"><path d="M569.500 612h-2.300a1.500 1.500 0 0 0-1.500 1.500v8a1.500 1.500 0 0 0 1.500 1.500h10a1.500 1.500 0 0 0 1.500-1.500v-8a1.500 1.500 0 0 0-1.500-1.500h-2.300"/><path d="M572.200 618.500v-12.500M569 608.800l3.200-3.200 3.200 3.200"/></g>
<!-- tag -->
<g fill="none" stroke="#d2d2d2" stroke-width="1.300" stroke-linejoin="round"><path d="M611.500 608h7a2 2 0 0 1 2 2v7l-8 7.500a1.500 1.500 0 0 1-2 0l-7.500-7.500a1.500 1.500 0 0 1 0-2z" /><circle cx="616.300" cy="612.200" r="1.100" fill="#d2d2d2" stroke="none"/></g>
<!-- more -->
<circle cx="652.800" cy="615.800" r="8" fill="none" stroke="#9c9c9c" stroke-width="1.300"/>
<g fill="#9c9c9c"><circle cx="649" cy="615.800" r="1.100"/><circle cx="652.800" cy="615.800" r="1.100"/><circle cx="656.600" cy="615.800" r="1.100"/></g>
<path d="M669.500 614.300L673 617.700L676.500 614.300" fill="none" stroke="#9c9c9c" stroke-width="1.500" stroke-linecap="round" stroke-linejoin="round"/>
<!-- search -->
<circle cx="736.300" cy="614.200" r="5.500" fill="none" stroke="#9c9c9c" stroke-width="1.500"/><path d="M740.300 618.300L745.300 623.300" stroke="#9c9c9c" stroke-width="1.700" stroke-linecap="round"/>
<!-- column header -->
<path d="M356.500 646v18M538.500 646v18M634.500 646v18" stroke="#dadada"/>
<path d="M339.800 657.300L343.700 653.400L347.600 657.300" fill="none" stroke="#7a7a7a" stroke-width="1.200" stroke-linecap="round" stroke-linejoin="round"/>
<rect x="47" y="695.5" width="709" height="19" rx="5" fill="#f4f5f5"/>
<rect x="47" y="735.5" width="709" height="19" rx="5" fill="#f4f5f5"/>
<rect x="47" y="775.5" width="709" height="19" rx="5" fill="#f4f5f5"/>
<rect x="47" y="815.5" width="709" height="19" rx="5" fill="#f4f5f5"/>
<rect x="47" y="855.5" width="709" height="19" rx="5" fill="#f4f5f5"/>
<path d="M52.300 683.5l3.400 3.300 3.400-3.300" fill="none" stroke="#7a7a7a" stroke-width="1.400" stroke-linecap="round" stroke-linejoin="round"/>
<g transform="translate(63.700 678.3) scale(.947 .99)"><path d="M0 2.200A1.600 1.600 0 0 1 1.600 .6H5.200c.7 0 1 .3 1.400.8l.6.700H13.600a1.600 1.600 0 0 1 1.600 1.600V5H0z" fill="#2f97e6"/><path d="M0 4.300a1 1 0 0 1 1-1H14.200a1 1 0 0 1 1 1V12.200a1.600 1.600 0 0 1-1.600 1.600H1.600A1.600 1.600 0 0 1 0 12.200z" fill="url(#fg)"/></g>
<rect x="79.800" y="698.7" width="12.600" height="12.400" rx="1" fill="#fff" stroke="#a9a9a9" stroke-width=".8"/>
<path d="M80 711.3h12.200" stroke="#8e8e8e" stroke-width=".6"/>
<rect x="81.300" y="700.2" width="9.600" height="9.400" fill="#fcfcfc" stroke="#e2e2e2" stroke-width=".5"/>
<path d="M83 704.0c1.300-.4 2.500-1.400 3.300-2.700-1 2-1.600 4.300-1.300 7" fill="none" stroke="#2e2e2e" stroke-width="1" stroke-linecap="round" stroke-linejoin="round"/>
<rect x="79.800" y="718.7" width="12.600" height="12.400" rx="1" fill="#fff" stroke="#a9a9a9" stroke-width=".8"/>
<path d="M80 731.3h12.200" stroke="#8e8e8e" stroke-width=".6"/>
<rect x="81.300" y="720.2" width="9.600" height="9.400" fill="#fcfcfc" stroke="#e2e2e2" stroke-width=".5"/>
<circle cx="86" cy="724.9" r="3.100" fill="none" stroke="#2e2e2e" stroke-width=".9"/><circle cx="85.700" cy="724.7" r="1.400" fill="none" stroke="#2e2e2e" stroke-width=".8"/><path d="M83.500 723.7l4 1.800" stroke="#2e2e2e" stroke-width=".7"/>
<rect x="79.800" y="738.7" width="12.600" height="12.400" rx="1" fill="#fff" stroke="#a9a9a9" stroke-width=".8"/>
<path d="M80 751.3h12.200" stroke="#8e8e8e" stroke-width=".6"/>
<rect x="81.300" y="740.2" width="9.600" height="9.400" fill="#fcfcfc" stroke="#e2e2e2" stroke-width=".5"/>
<path d="M83.600 741.3c1.800-.9 3.900-.4 3.700 1.100-.2 1.100-1.700 1.600-3.200 1.600 2 0 3.900.6 3.500 2.100-.4 1.500-2.700 1.500-4.600.5" fill="none" stroke="#2e2e2e" stroke-width="1" stroke-linecap="round"/>
<path d="M52.300 763.5l3.400 3.300 3.400-3.300" fill="none" stroke="#7a7a7a" stroke-width="1.400" stroke-linecap="round" stroke-linejoin="round"/>
<g transform="translate(63.700 758.3) scale(.947 .99)"><path d="M0 2.200A1.600 1.600 0 0 1 1.600 .6H5.200c.7 0 1 .3 1.400.8l.6.700H13.600a1.600 1.600 0 0 1 1.600 1.600V5H0z" fill="#2f97e6"/><path d="M0 4.300a1 1 0 0 1 1-1H14.200a1 1 0 0 1 1 1V12.200a1.600 1.600 0 0 1-1.600 1.600H1.600A1.600 1.600 0 0 1 0 12.200z" fill="url(#fg)"/></g>
<rect x="79.800" y="778.7" width="12.600" height="12.400" rx="1" fill="#fff" stroke="#a9a9a9" stroke-width=".8"/>
<path d="M80 791.3h12.200" stroke="#8e8e8e" stroke-width=".6"/>
<rect x="81.300" y="780.2" width="9.600" height="9.400" fill="#fcfcfc" stroke="#e2e2e2" stroke-width=".5"/>
<path d="M83 784.0c1.300-.4 2.500-1.400 3.300-2.700-1 2-1.600 4.300-1.300 7" fill="none" stroke="#c8262c" stroke-width="1" stroke-linecap="round" stroke-linejoin="round"/>
<rect x="79.800" y="798.7" width="12.600" height="12.400" rx="1" fill="#fff" stroke="#a9a9a9" stroke-width=".8"/>
<path d="M80 811.3h12.200" stroke="#8e8e8e" stroke-width=".6"/>
<rect x="81.300" y="800.2" width="9.600" height="9.400" fill="#fcfcfc" stroke="#e2e2e2" stroke-width=".5"/>
<circle cx="86" cy="804.9" r="3.100" fill="none" stroke="#c8262c" stroke-width=".9"/><circle cx="85.700" cy="804.7" r="1.400" fill="none" stroke="#c8262c" stroke-width=".8"/><path d="M83.500 803.7l4 1.800" stroke="#c8262c" stroke-width=".7"/>
<rect x="79.800" y="818.7" width="12.600" height="12.400" rx="1" fill="#fff" stroke="#a9a9a9" stroke-width=".8"/>
<path d="M80 831.3h12.200" stroke="#8e8e8e" stroke-width=".6"/>
<rect x="81.300" y="820.2" width="9.600" height="9.400" fill="#fcfcfc" stroke="#e2e2e2" stroke-width=".5"/>
<path d="M83.600 821.3c1.800-.9 3.900-.4 3.700 1.100-.2 1.100-1.700 1.600-3.200 1.600 2 0 3.900.6 3.500 2.100-.4 1.500-2.700 1.500-4.600.5" fill="none" stroke="#c8262c" stroke-width="1" stroke-linecap="round"/>
<path d="M52.100 895.600h8.100l1.900 8.800v2.400a.8.8 0 0 1-.8.8H51a.8.8 0 0 1-.8-.8v-2.400z" fill="url(#hdg)" stroke="#8a6515" stroke-width=".7"/><path d="M50.500 904.800h11.400" stroke="#9a7218" stroke-width=".7"/><circle cx="60" cy="906.300" r=".5" fill="#3c3"/>
<g transform="translate(135.6 895.3) scale(0.855)"><path d="M0 2.200A1.600 1.600 0 0 1 1.600 .6H5.200c.7 0 1 .3 1.400.8l.6.700H13.600a1.600 1.600 0 0 1 1.600 1.600V5H0z" fill="#2f97e6"/><path d="M0 4.300a1 1 0 0 1 1-1H14.200a1 1 0 0 1 1 1V12.200a1.600 1.600 0 0 1-1.600 1.600H1.600A1.600 1.600 0 0 1 0 12.200z" fill="url(#fg)"/></g>
<g transform="translate(221.9 895.3) scale(0.855)"><path d="M0 2.200A1.600 1.600 0 0 1 1.600 .6H5.200c.7 0 1 .3 1.400.8l.6.700H13.600a1.600 1.600 0 0 1 1.600 1.600V5H0z" fill="#2f97e6"/><path d="M0 4.300a1 1 0 0 1 1-1H14.200a1 1 0 0 1 1 1V12.200a1.600 1.600 0 0 1-1.600 1.600H1.600A1.600 1.600 0 0 1 0 12.200z" fill="url(#fg)"/></g>
<g transform="translate(320.0 895.3) scale(0.855)"><path d="M0 2.200A1.600 1.600 0 0 1 1.600 .6H5.200c.7 0 1 .3 1.400.8l.6.700H13.600a1.600 1.600 0 0 1 1.600 1.600V5H0z" fill="#2f97e6"/><path d="M0 4.300a1 1 0 0 1 1-1H14.200a1 1 0 0 1 1 1V12.200a1.600 1.600 0 0 1-1.600 1.600H1.600A1.600 1.600 0 0 1 0 12.200z" fill="url(#fg)"/></g>
<g transform="translate(409.8 895.3) scale(0.855)"><path d="M0 2.200A1.600 1.600 0 0 1 1.600 .6H5.200c.7 0 1 .3 1.400.8l.6.700H13.600a1.600 1.600 0 0 1 1.600 1.600V5H0z" fill="#2f97e6"/><path d="M0 4.300a1 1 0 0 1 1-1H14.200a1 1 0 0 1 1 1V12.200a1.600 1.600 0 0 1-1.600 1.600H1.600A1.600 1.600 0 0 1 0 12.200z" fill="url(#fg)"/></g>
<g transform="translate(463.3 895.3) scale(0.855)"><path d="M0 2.200A1.600 1.600 0 0 1 1.600 .6H5.200c.7 0 1 .3 1.400.8l.6.700H13.600a1.600 1.600 0 0 1 1.600 1.600V5H0z" fill="#2f97e6"/><path d="M0 4.300a1 1 0 0 1 1-1H14.200a1 1 0 0 1 1 1V12.200a1.600 1.600 0 0 1-1.600 1.600H1.600A1.600 1.600 0 0 1 0 12.200z" fill="url(#fg)"/></g>
<path d="M125.3 900.200l2.100 2-2.100 2" fill="none" stroke="#777" stroke-width="1.200" stroke-linecap="round" stroke-linejoin="round"/>
<path d="M212.1 900.200l2.100 2-2.100 2" fill="none" stroke="#777" stroke-width="1.200" stroke-linecap="round" stroke-linejoin="round"/>
<path d="M310.6 900.200l2.100 2-2.100 2" fill="none" stroke="#777" stroke-width="1.200" stroke-linecap="round" stroke-linejoin="round"/>
<path d="M400.5 900.200l2.100 2-2.100 2" fill="none" stroke="#777" stroke-width="1.200" stroke-linecap="round" stroke-linejoin="round"/>
<path d="M454.8 900.200l2.100 2-2.100 2" fill="none" stroke="#777" stroke-width="1.200" stroke-linecap="round" stroke-linejoin="round"/>
</svg>
<span class="t" id="ftitle" style="left:125.500px;top:19.200px;font-size:14.700px;font-weight:bold;color:#aaa">correspondingFilesInTwoFolders</span>
<span class="t" id="h1" style="left:84.200px;top:58.800px;font-size:11.600px;font-weight:bold;color:#2a2a2a">Name</span>
<span class="t hd" id="h2" style="left:364.200px;top:58.800px">Date Modified</span>
<span class="t hd" id="h3" style="left:545.200px;top:58.800px">Size</span>
<span class="t hd" id="h4" style="left:642px;top:58.800px">Kind</span>
<span class="t nm" style="left:84.3px;top:89.0px">folder1</span>
<span class="t gr dt" style="left:364.500px;top:89.0px">Today at 09:48</span>
<span class="t gr" style="right:138.7px;top:89.0px;letter-spacing:1.2px;margin-right:-1px">--</span>
<span class="t gr" style="left:642px;top:89.0px">Folder</span>
<span class="t nm tw" style="left:99.5px;top:109.0px">001_tw.psd</span>
<span class="t gr dt" style="left:364.500px;top:109.0px">Today at 09:48</span>
<span class="t gr" style="right:138.7px;top:109.0px">2,1 MB</span>
<span class="t gr" style="left:642px;top:109.0px">Adobe…cument</span>
<span class="t nm tw" style="left:99.5px;top:129.0px">002_tw.psd</span>
<span class="t gr dt" style="left:364.500px;top:129.0px">Today at 08:51</span>
<span class="t gr" style="right:138.7px;top:129.0px">5,1 MB</span>
<span class="t gr" style="left:642px;top:129.0px">Adobe…cument</span>
<span class="t nm tw" style="left:99.5px;top:149.0px">003_tw.psd</span>
<span class="t gr dt" style="left:364.500px;top:149.0px">Today at 08:52</span>
<span class="t gr" style="right:138.7px;top:149.0px">3,2 MB</span>
<span class="t gr" style="left:642px;top:149.0px">Adobe…cument</span>
<span class="t nm" style="left:84.3px;top:169.0px">folder2</span>
<span class="t gr dt" style="left:364.500px;top:169.0px">Today at 09:49</span>
<span class="t gr" style="right:138.7px;top:169.0px;letter-spacing:1.2px;margin-right:-1px">--</span>
<span class="t gr" style="left:642px;top:169.0px">Folder</span>
<span class="t nm" style="left:99.5px;top:189.0px;letter-spacing:.1px">asda_001.psd</span>
<span class="t gr dt" style="left:364.500px;top:189.0px">Today at 09:49</span>
<span class="t gr" style="right:138.7px;top:189.0px">2,1 MB</span>
<span class="t gr" style="left:642px;top:189.0px">Adobe…cument</span>
<span class="t nm" style="left:99.5px;top:209.0px;letter-spacing:.1px">asda_002.psd</span>
<span class="t gr dt" style="left:364.500px;top:209.0px">Today at 09:49</span>
<span class="t gr" style="right:138.7px;top:209.0px">5,1 MB</span>
<span class="t gr" style="left:642px;top:209.0px">Adobe…cument</span>
<span class="t nm" style="left:99.5px;top:229.0px;letter-spacing:.1px">asda_003.psd</span>
<span class="t gr dt" style="left:364.500px;top:229.0px">Today at 09:49</span>
<span class="t gr" style="right:138.7px;top:229.0px">3,2 MB</span>
<span class="t gr" style="left:642px;top:229.0px">Adobe…cument</span>
<span class="t pb" style="left:67.4px;top:306.1px">Archiv HD</span>
<span class="t pb" style="left:153.3px;top:306.1px">Pfaffi HD1</span>
<span class="t pb" style="left:239.2px;top:306.1px;letter-spacing:.32px">pfaffi_privat</span>
<span class="t pb" style="left:337.7px;top:306.1px">photoshop</span>
<span class="t pb" style="left:427.6px;top:306.1px">test</span>
<span class="t pb" style="left:481.9px;top:306.1px">correspondingFilesInTwoFolders</span>
<span class="t" id="fstat" style="left:324.200px;top:334.300px;font-size:11.700px;color:#a0a0a0">8 items, 17,74 GB available</span>
</div>


</body></html>
